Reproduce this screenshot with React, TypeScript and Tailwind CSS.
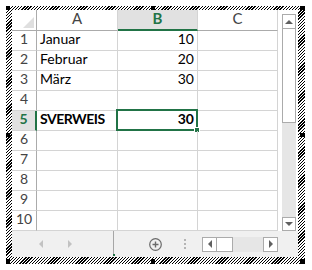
import React from 'react'

type Row = { n: number; a?: string; b?: string; active?: boolean }

const rows: Row[] = [
  { n: 1, a: 'Januar', b: '10' },
  { n: 2, a: 'Februar', b: '20' },
  { n: 3, a: 'März', b: '30' },
  { n: 4 },
  { n: 5, a: 'SVERWEIS', b: '30', active: true },
  { n: 6 },
  { n: 7 },
  { n: 8 },
  { n: 9 },
  { n: 10 },
]

const font = "font-['Lato','Liberation_Sans',sans-serif]"

function Tri({ dir, color }: { dir: 'l' | 'r' | 'u' | 'd'; color: string }) {
  const pts = {
    l: '4,0 4,8 0,4',
    r: '0,0 0,8 4,4',
    u: '0,4 8,4 4,0',
    d: '0,0 8,0 4,4',
  }[dir]
  const horiz = dir === 'l' || dir === 'r'
  return (
    <svg width={horiz ? 4 : 8} height={horiz ? 8 : 4} viewBox={horiz ? '0 0 4 8' : '0 0 8 4'}>
      <polygon points={pts} fill={color} />
    </svg>
  )
}

export default function App() {
  return (
    <div className={`w-[312px] h-[270px] bg-white ${font}`}>
      {/* hatched frame of the embedded object */}
      <div className="relative ml-[6px] mt-[6px] w-[299px] h-[258px] pl-[6px] pt-[4px] pr-[7px] pb-[7px] bg-[repeating-linear-gradient(135deg,#000_0px,#000_1px,#fff_1px,#fff_2.2px)]">
        <div className="w-[286px] h-[247px] bg-white flex flex-col">
          <div className="flex h-[221px]">
            {/* sheet grid */}
            <div className="grid grid-cols-[25px_81px_80px_80px] grid-rows-[21px_repeat(10,20px)] text-[14px]">
              <div className="relative border-r border-b border-r-[#ababab] border-b-[#ababab]">
                <svg className="absolute right-[2px] bottom-[2px]" width="11" height="11">
                  <polygon points="11,0 11,11 0,11" fill="#dfdfdf" />
                </svg>
              </div>
              <div className="border-r border-b border-r-[#d4d4d4] border-b-[#ababab] flex items-end justify-center pb-[1px] text-[15px] text-[#444]">A</div>
              <div className="border-r border-r-[#d4d4d4] border-b-2 border-b-[#217346] bg-[#e1e1e1] flex items-end justify-center text-[15px] text-[#217346] font-bold">B</div>
              <div className="border-r border-b border-r-[#d4d4d4] border-b-[#ababab] flex items-end justify-center pb-[1px] text-[15px] text-[#444]">C</div>
              {rows.map((r) => (
                <React.Fragment key={r.n}>
                  <div
                    className={
                      r.active
                        ? 'border-b border-b-[#d4d4d4] border-r-2 border-r-[#217346] bg-[#e1e1e1] flex items-end justify-center pb-[1px] text-[#217346] font-bold'
                        : 'border-b border-r border-b-[#d4d4d4] border-r-[#ababab] flex items-end justify-center pb-[1px] text-[#444]'
                    }
                  >
                    {r.n}
                  </div>
                  <div className={`border-r border-b border-[#d4d4d4] flex items-end pl-[3px] pb-[1px] text-black ${r.active ? 'font-bold tracking-[-0.5px]' : ''}`}>
                    {r.a}
                  </div>
                  <div className={`relative border-r border-b border-[#d4d4d4] flex items-end justify-end pr-[3px] pb-[1px] text-black ${r.active ? 'font-bold' : ''}`}>
                    {r.b}
                    {r.active && (
                      <div className="absolute -left-[2px] -top-[2px] -right-[1px] -bottom-[1px] border-2 border-[#217346]">
                        <div className="absolute -right-[4px] -bottom-[4px] w-[6px] h-[6px] bg-[#217346] border border-white" />
                      </div>
                    )}
                  </div>
                  <div className="border-r border-b border-[#d4d4d4]" />
                </React.Fragment>
              ))}
            </div>
            {/* vertical scrollbar */}
            <div className="w-[20px] pl-[4px] pt-[4px] flex flex-col">
              <div className="w-[14px] h-[15px] border border-[#ababab] bg-white flex items-center justify-center">
                <Tri dir="u" color="#606060" />
              </div>
              <div className="w-[14px] h-[94px] border border-t-0 border-[#ababab] bg-white" />
              <div className="w-[14px] flex-1 bg-[#e6e6e6]" />
              <div className="w-[14px] h-[14px] border border-[#ababab] bg-white flex items-center justify-center">
                <Tri dir="d" color="#606060" />
              </div>
            </div>
          </div>
          {/* sheet tabs + horizontal scrollbar */}
          <div className="flex-1 bg-[#f0f0f0] flex items-center">
            <div className="ml-[27px]">
              <Tri dir="l" color="#c2c2c2" />
            </div>
            <div className="ml-[25px]">
              <Tri dir="r" color="#c2c2c2" />
            </div>
            <div className="relative ml-[41px] w-px self-stretch mb-[1px] bg-[#a6a6a6]">
              <div className="absolute left-0 bottom-0 w-[2px] h-[2px] bg-[#217346]" />
            </div>
            <svg className="ml-[35px]" width="13" height="13" viewBox="0 0 13 13">
              <circle cx="6.5" cy="6.5" r="5.8" fill="none" stroke="#6a6a6a" strokeWidth="1.2" />
              <path d="M3.5 6.5h6M6.5 3.5v6" stroke="#6a6a6a" strokeWidth="1.4" />
            </svg>
            <div className="ml-[22px] flex flex-col gap-[2px]">
              <div className="w-[2px] h-[2px] bg-[#b4b4b4]" />
              <div className="w-[2px] h-[2px] bg-[#b4b4b4]" />
              <div className="w-[2px] h-[2px] bg-[#b4b4b4]" />
            </div>
            <div className="ml-[16px] flex h-[15px]">
              <div className="w-[15px] border border-[#ababab] bg-white flex items-center justify-center">
                <Tri dir="l" color="#606060" />
              </div>
              <div className="w-[16px] border border-l-0 border-[#ababab] bg-white" />
              <div className="w-[30px] bg-[#e6e6e6]" />
              <div className="w-[15px] border border-[#ababab] bg-white flex items-center justify-center">
                <Tri dir="r" color="#606060" />
              </div>
            </div>
          </div>
        </div>

        {/* sizing handles */}
        <div className="absolute left-0 top-0 w-[4px] h-[4px] bg-black" />
        <div className="absolute left-[145px] top-0 w-[4px] h-[4px] bg-black" />
        <div className="absolute right-0 top-0 w-[5px] h-[4px] bg-black" />
        <div className="absolute left-0 top-[127px] w-[4px] h-[4px] bg-black" />
        <div className="absolute right-0 top-[127px] w-[5px] h-[4px] bg-black" />
        <div className="absolute left-0 bottom-0 w-[4px] h-[5px] bg-black" />
        <div className="absolute left-[145px] bottom-0 w-[4px] h-[5px] bg-black" />
        <div className="absolute right-0 bottom-0 w-[5px] h-[5px] bg-black" />
      </div>
    </div>
  )
}
